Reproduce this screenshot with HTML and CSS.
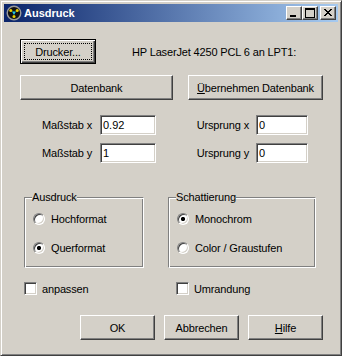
FILE: index.html
```html
<!DOCTYPE html>
<html lang="de">

<head>
  <meta charset="UTF-8" />
  <meta name="viewport" content="width=device-width, initial-scale=1.0" />
  <title>Ausdruck</title>
  <link rel="stylesheet" href="styles.css">
</head>

<body>
  <div class="window">
    <div class="titlebar">
      <svg class="app-icon" width="16" height="16" viewBox="0 0 16 16">
        <circle cx="8" cy="8" r="6.8" fill="#111" stroke="#9a9a9a" stroke-width="1.4" />
        <circle cx="4.8" cy="5.6" r="1.5" fill="#e8d000" />
        <circle cx="11.2" cy="5.6" r="1.5" fill="#e8d000" />
        <circle cx="8" cy="11.6" r="1.5" fill="#e8d000" />
        <path d="M6 6.5 L10 6.5 L8 10 Z" fill="#20c8e8" />
      </svg>
      <span class="title">Ausdruck</span>
      <div class="caption-buttons">
        <button class="cap">
          <svg width="14" height="12" viewBox="0 0 14 12" shape-rendering="crispEdges">
            <rect x="3" y="8" width="6" height="2" fill="#000" />
          </svg>
        </button>
        <button class="cap">
          <svg width="14" height="12" viewBox="0 0 14 12" shape-rendering="crispEdges">
            <rect x="2" y="1" width="9" height="9" fill="none" stroke="#000" stroke-width="1" transform="translate(0.5 0.5)" />
            <rect x="2" y="2" width="9" height="1" fill="#000" />
          </svg>
        </button>
        <button class="cap close">
          <svg width="14" height="12" viewBox="0 0 14 12" shape-rendering="crispEdges">
            <path d="M3 2h2v1h1v1h2v-1h1v-1h2v1h-1v1h-1v1h-1v1h1v1h1v1h1v1h-2v-1h-1v-1h-2v1h-1v1h-2v-1h1v-1h1v-1h1v-1h-1v-1h-1v-1h-1z" fill="#000" />
          </svg>
        </button>
      </div>
    </div>

    <div class="client">
      <div class="printer-row">
        <button class="btn default">Drucker...</button>
        <span class="printer-name">HP LaserJet 4250 PCL 6 an LPT1:</span>
      </div>

      <div class="db-row">
        <button class="btn db">Datenbank</button>
        <button class="btn db-take"><u>Ü</u>bernehmen Datenbank</button>
      </div>

      <div class="fields">
        <label class="lbl">Maßstab x</label>
        <input class="edit" type="text" value="0.92">
        <label class="lbl lbl-right">Ursprung x</label>
        <input class="edit edit-small" type="text" value="0">
        <label class="lbl">Maßstab y</label>
        <input class="edit" type="text" value="1">
        <label class="lbl lbl-right">Ursprung y</label>
        <input class="edit edit-small" type="text" value="0">
      </div>

      <div class="groups">
        <div class="group group-print">
          <span class="group-title">Ausdruck</span>
          <label class="option"><input type="radio" name="format"> Hochformat</label>
          <label class="option"><input type="radio" name="format" checked> Querformat</label>
        </div>
        <div class="group group-shade">
          <span class="group-title">Schattierung</span>
          <label class="option"><input type="radio" name="shade" checked> Monochrom</label>
          <label class="option"><input type="radio" name="shade"> Color / Graustufen</label>
        </div>
      </div>

      <div class="checks">
        <label class="check check-fit"><input type="checkbox"> anpassen</label>
        <label class="check check-frame"><input type="checkbox"> Umrandung</label>
      </div>

      <div class="actions">
        <button class="btn action">OK</button>
        <button class="btn action">Abbrechen</button>
        <button class="btn action"><u>H</u>ilfe</button>
      </div>
    </div>
  </div>
</body>

</html>
```

FILE: styles.css
```css
body {
  margin: 0;
  font-family: "Liberation Sans", Arial, sans-serif;
  font-size: 11px;
  letter-spacing: -0.15px;
  color: #000;
  background-color: #d4d0c8;
}

.window {
  box-sizing: border-box;
  width: 342px;
  height: 356px;
  padding: 3px;
  border: 1px solid;
  border-color: #d4d0c8 #404040 #404040 #d4d0c8;
  box-shadow: inset 1px 1px #fff, inset -1px -1px #808080;
  background-color: #d4d0c8;
  display: flex;
  flex-direction: column;
}

/* title bar */

.titlebar {
  height: 18px;
  display: flex;
  align-items: center;
  padding: 0 2px;
  background: linear-gradient(to right, #0a246a, #a6caf0);
}

.app-icon {
  display: block;
  margin-right: 2px;
}

.title {
  color: #fff;
  font-weight: bold;
  font-size: 11px;
  line-height: 13px;
  letter-spacing: 0;
  flex: 1;
}

.caption-buttons {
  display: flex;
}

.cap {
  box-sizing: border-box;
  width: 16px;
  height: 14px;
  padding: 0;
  border: 1px solid;
  border-color: #fff #404040 #404040 #fff;
  box-shadow: inset -1px -1px #808080;
  background-color: #d4d0c8;
  display: flex;
  align-items: center;
  justify-content: center;
}

.cap svg {
  display: block;
}

.close {
  margin-left: 2px;
}

/* client area */

.client {
  flex: 1;
  padding: 17px 0 0 16px;
}

.btn {
  box-sizing: border-box;
  height: 25px;
  padding: 0;
  font-family: "Liberation Sans", Arial, sans-serif;
  font-size: 11px;
  letter-spacing: -0.15px;
  color: #000;
  background-color: #d4d0c8;
  border: 1px solid;
  border-color: #fff #404040 #404040 #fff;
  box-shadow: inset -1px -1px #808080;
  position: relative;
}

.default {
  width: 76px;
  border-color: #000;
  box-shadow: inset 1px 1px #fff, inset -1px -1px #404040, inset -2px -2px #808080;
}

.default::after {
  content: "";
  position: absolute;
  top: 3px;
  left: 3px;
  right: 3px;
  bottom: 3px;
  border: 1px dotted #000;
}

.printer-row {
  display: flex;
  align-items: center;
}

.printer-name {
  margin-left: 36px;
}

.db-row {
  display: flex;
  gap: 15px;
  margin-top: 11px;
}

.db {
  width: 153px;
}

.db-take {
  width: 135px;
}

/* edit fields */

.fields {
  display: grid;
  grid-template-columns: 80px 56px 100px 52px;
  grid-auto-rows: 20px;
  row-gap: 8px;
  align-items: center;
  margin-top: 15px;
}

.lbl {
  text-align: right;
  padding-right: 8px;
}

.lbl-right {
  padding-right: 7px;
}

.edit {
  box-sizing: border-box;
  width: 56px;
  height: 20px;
  margin: 0;
  padding: 0 2px;
  font-family: "Liberation Sans", Arial, sans-serif;
  font-size: 11px;
  color: #000;
  background-color: #fff;
  border: 1px solid;
  border-color: #808080 #fff #fff #808080;
  box-shadow: inset 1px 1px #404040, inset -1px -1px #d4d0c8;
  outline: none;
}

.edit-small {
  width: 52px;
}

/* group boxes */

.groups {
  display: flex;
  gap: 24px;
  margin-top: 34px;
  padding-left: 4px;
}

.group {
  box-sizing: border-box;
  height: 71px;
  padding: 15px 0 0 8px;
  border: 1px solid;
  border-color: #808080 #fff #fff #808080;
  box-shadow: inset 1px 1px #fff, inset -1px -1px #808080;
  position: relative;
  display: flex;
  flex-direction: column;
  gap: 17px;
}

.group-print {
  width: 120px;
}

.group-shade {
  width: 148px;
}

.group-title {
  position: absolute;
  top: -7px;
  left: 7px;
  line-height: 13px;
  background-color: #d4d0c8;
}

.option,
.check {
  display: flex;
  align-items: center;
  gap: 6px;
  height: 12px;
}

.option input {
  appearance: none;
  box-sizing: border-box;
  width: 12px;
  height: 12px;
  margin: 0;
  border-radius: 50%;
  border: 1px solid;
  border-color: #808080 #fff #fff #808080;
  box-shadow: inset 1px 1px #404040, inset -1px -1px #d4d0c8;
  background-color: #fff;
}

.option input:checked {
  background: radial-gradient(circle, #000 1.8px, #fff 2.4px);
}

/* check boxes */

.checks {
  display: flex;
  margin-top: 14px;
  padding-left: 4px;
}

.check {
  height: 13px;
  gap: 5px;
}

.check-fit {
  width: 152px;
}

.check input {
  appearance: none;
  box-sizing: border-box;
  width: 13px;
  height: 13px;
  margin: 0;
  border: 1px solid;
  border-color: #808080 #fff #fff #808080;
  box-shadow: inset 1px 1px #404040, inset -1px -1px #d4d0c8;
  background-color: #fff;
}

/* dialog buttons */

.actions {
  display: flex;
  gap: 9px;
  margin-top: 20px;
  padding-left: 60px;
}

.action {
  width: 75px;
}
```
